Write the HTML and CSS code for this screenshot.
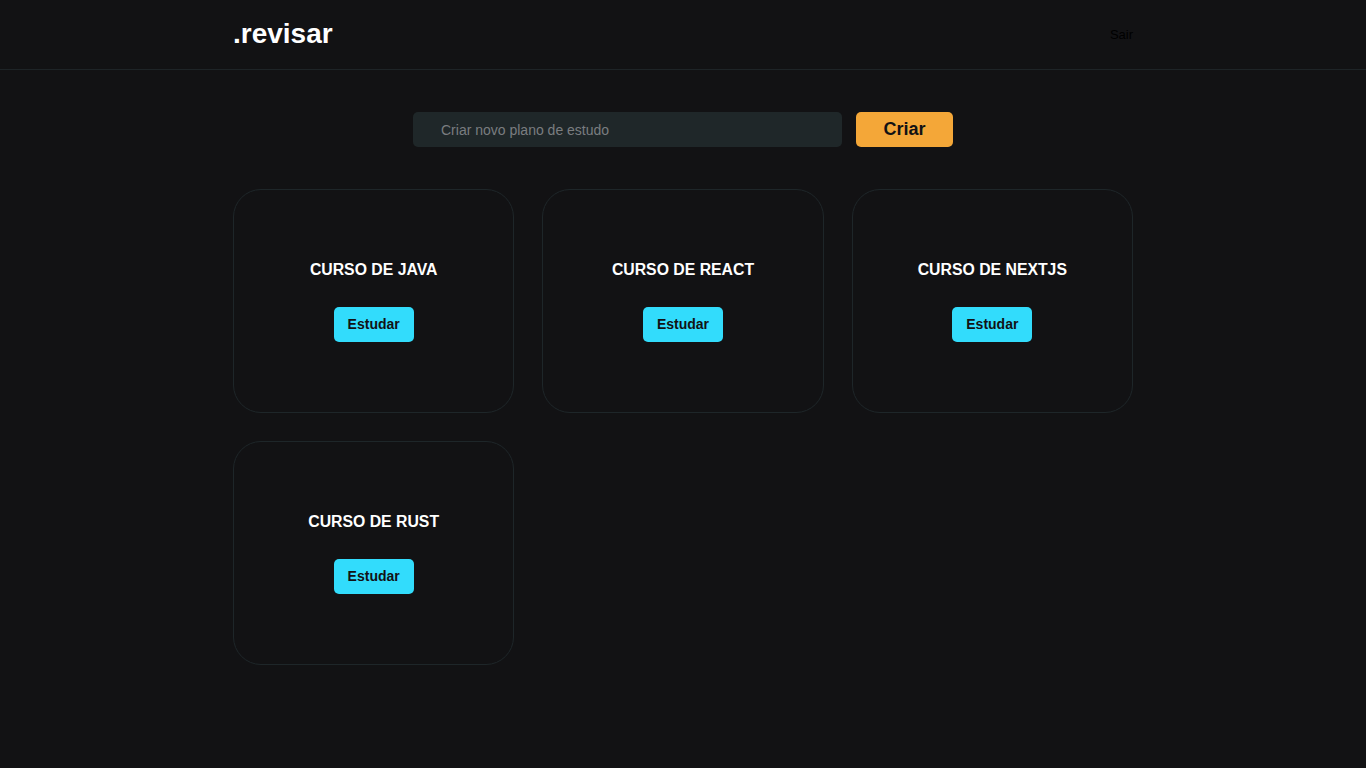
FILE: index.html
```html
<!DOCTYPE html>
<html lang="pt-BR">
<head>
<meta charset="utf-8">
<title>.revisar</title>
<link rel="stylesheet" href="styles.css">
</head>
<body>
<header class="header">
  <div class="header-inner">
    <span class="logo">.revisar</span>
    <button class="logout">Sair</button>
  </div>
</header>
<main class="main">
  <form class="create-form">
    <input class="create-input" type="text" placeholder="Criar novo plano de estudo">
    <button class="create-btn" type="button">Criar</button>
  </form>
  <section class="grid">
    <div class="card"><h2 class="card-title">CURSO DE JAVA</h2><button class="study-btn">Estudar</button></div>
    <div class="card"><h2 class="card-title">CURSO DE REACT</h2><button class="study-btn">Estudar</button></div>
    <div class="card"><h2 class="card-title">CURSO DE NEXTJS</h2><button class="study-btn">Estudar</button></div>
    <div class="card"><h2 class="card-title">CURSO DE RUST</h2><button class="study-btn">Estudar</button></div>
  </section>
</main>
</body>
</html>
```
FILE: styles.css
```css
* { box-sizing: border-box; }
html, body { margin: 0; padding: 0; }
body {
  background: #121214;
  color: #fff;
  font-family: "Liberation Sans", Arial, sans-serif;
  min-height: 100vh;
}
.header {
  height: 70px;
  border-bottom: 1px solid #1e2427;
}
.header-inner {
  width: 900px;
  height: 69px;
  margin: 0 auto;
  display: flex;
  align-items: center;
  justify-content: space-between;
}
.logo {
  font-size: 28px;
  font-weight: 700;
  color: #fff;
  line-height: 1;
  margin-top: -1px;
}
.logout {
  background: none;
  border: none;
  padding: 0;
  color: #000;
  font-family: "Liberation Sans", Arial, sans-serif;
  font-size: 13px;
  cursor: pointer;
}
.main {
  width: 900px;
  margin: 0 auto;
  padding-top: 42px;
}
.create-form {
  display: flex;
  justify-content: center;
  gap: 14px;
  margin: 0 0 42px 0;
}
.create-input {
  width: 429px;
  height: 35px;
  background: #1f2729;
  border: none;
  border-radius: 5px;
  padding: 0 0 0 28px;
  color: #fff;
  font-family: "Liberation Sans", Arial, sans-serif;
  font-size: 14px;
  outline: none;
}
.create-input::placeholder { color: #7a7d80; }
.create-btn {
  width: 97px;
  height: 35px;
  background: #f4a738;
  border: none;
  border-radius: 5px;
  color: #121214;
  font-family: "Liberation Sans", Arial, sans-serif;
  font-size: 18px;
  font-weight: 700;
  cursor: pointer;
}
.grid {
  display: grid;
  grid-template-columns: repeat(3, 1fr);
  column-gap: 28px;
  row-gap: 28px;
}
.card {
  height: 224px;
  border: 1px solid #1e2629;
  border-radius: 28px;
  display: flex;
  flex-direction: column;
  align-items: center;
  justify-content: center;
  gap: 28px;
}
.card-title {
  margin: 0;
  font-size: 15.8px;
  font-weight: 700;
  color: #fff;
  line-height: 18px;
}
.study-btn {
  width: 80px;
  height: 35px;
  background: #32dcfc;
  border: none;
  border-radius: 5px;
  color: #121214;
  font-family: "Liberation Sans", Arial, sans-serif;
  font-size: 14px;
  font-weight: 700;
  cursor: pointer;
}
```
